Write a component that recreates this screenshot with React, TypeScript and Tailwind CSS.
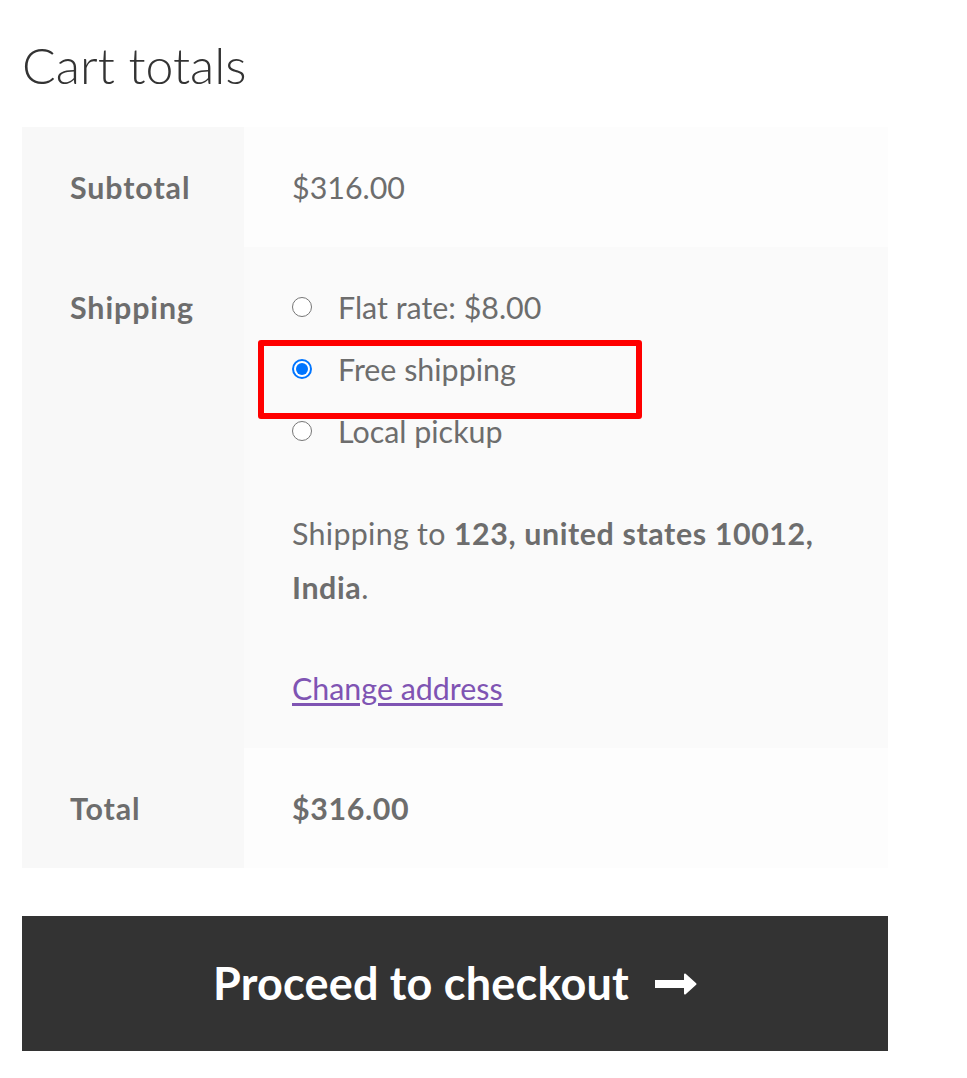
import React from "react";

function Radio({ checked }: { checked?: boolean }) {
  return checked ? (
    <span className="inline-flex h-[20px] w-[20px] shrink-0 items-center justify-center rounded-full border-[2px] border-[#0075ff] bg-white">
      <span className="h-[12px] w-[12px] rounded-full bg-[#0075ff]" />
    </span>
  ) : (
    <span className="inline-block h-[20px] w-[20px] shrink-0 rounded-full border-[1.5px] border-[#767676] bg-white" />
  );
}

function Arrow() {
  return (
    <svg width="42" height="22" viewBox="0 0 42 22" className="shrink-0">
      <rect x="0" y="7" width="33" height="8" fill="#ffffff" />
      <path d="M30 1.5 L40.5 11 L30 20.5 Z" fill="#ffffff" stroke="#ffffff" strokeWidth="2" strokeLinejoin="round" />
    </svg>
  );
}

export default function App() {
  const font = { fontFamily: "Lato, 'Noto Sans', sans-serif" };
  return (
    <div className="relative min-h-[1078px] w-[967px] bg-white" style={font}>
      <div className="ml-[22px] w-[866px]">
        <h2 className="pt-[25px] text-[50px] font-light leading-[80px] text-[#333333]">Cart totals</h2>
        <div className="mt-[22px] text-[30.4px] text-[#6d6d6d]">
          <div className="flex">
            <div className="flex h-[120px] w-[222px] items-center bg-[#f8f8f8] pl-[48px] font-bold leading-[54px] tracking-[0.9px]">Subtotal</div>
            <div className="flex h-[120px] flex-1 items-center bg-[#fdfdfd] pl-[48px] leading-[54px]">$316.00</div>
          </div>
          <div className="flex">
            <div className="w-[222px] bg-[#f8f8f8] pl-[48px] pt-[33px] font-bold leading-[54px] tracking-[0.9px]">Shipping</div>
            <div className="flex-1 bg-[#fafafa] pb-[33px] pl-[48px] pt-[33px] leading-[54px]">
              <ul>
                <li className="mb-[8px] flex items-center gap-[26px]">
                  <Radio />
                  <span>Flat rate: $8.00</span>
                </li>
                <li className="mb-[8px] flex items-center gap-[26px]">
                  <Radio checked />
                  <span>Free shipping</span>
                </li>
                <li className="flex items-center gap-[26px]">
                  <Radio />
                  <span>Local pickup</span>
                </li>
              </ul>
              <p className="mt-[48px] pr-[40px] tracking-[0.3px]">
                Shipping to <strong className="font-bold tracking-[0.6px]">123, united states 10012, India</strong>.
              </p>
              <p className="mt-[47px]">
                <a href="#" className="text-[#7f54b3] underline decoration-[3px] underline-offset-[3px]">Change address</a>
              </p>
            </div>
          </div>
          <div className="flex">
            <div className="flex h-[120px] w-[222px] items-center bg-[#f8f8f8] pl-[48px] font-bold leading-[54px] tracking-[0.9px]">Total</div>
            <div className="flex h-[120px] flex-1 items-center bg-[#fdfdfd] pl-[48px] font-bold leading-[54px] tracking-[0.6px]">$316.00</div>
          </div>
        </div>
        <button className="mt-[48px] flex h-[135px] w-full items-center justify-center gap-[26px] bg-[#333333] text-[45px] font-bold text-white">
          <span className="tracking-[0.2px]">Proceed to checkout</span>
          <Arrow />
        </button>
      </div>
      <div className="pointer-events-none absolute left-[258px] top-[340px] h-[79px] w-[384px] rounded-[3px] border-[6px] border-[#ff0000]" />
    </div>
  );
}
